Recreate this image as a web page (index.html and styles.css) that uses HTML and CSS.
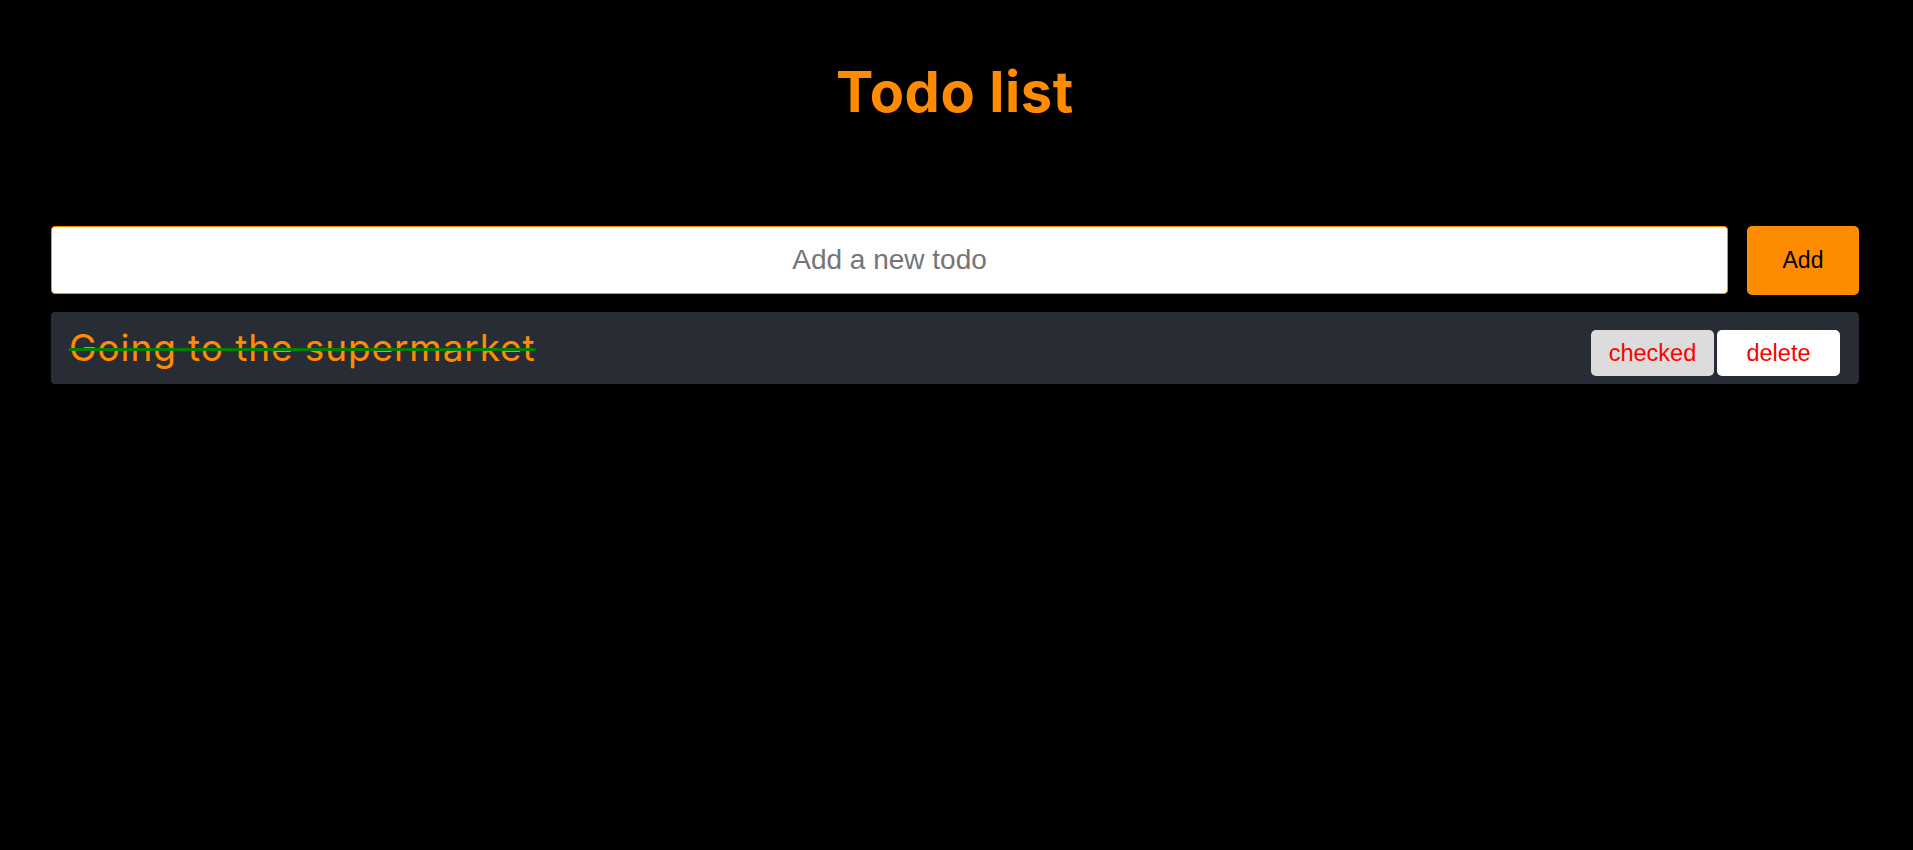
FILE: index.html
```html
<!DOCTYPE html>
<html lang="en">
<head>
<meta charset="utf-8">
<title>Todo list</title>
<link rel="stylesheet" href="styles.css">
</head>
<body>
<div class="app">
  <h1 class="title">Todo list</h1>
  <form class="add-form">
    <input class="add-input" type="text" placeholder="Add a new todo">
    <button class="add-btn" type="button">Add</button>
  </form>
  <ul class="todos">
    <li class="todo">
      <span class="todo-text done">Going to the supermarket</span>
      <div class="todo-actions">
        <button class="btn btn-checked" type="button">checked</button>
        <button class="btn btn-delete" type="button">delete</button>
      </div>
    </li>
  </ul>
</div>
</body>
</html>
```
FILE: styles.css
```css
html, body {
  margin: 0;
  padding: 0;
  background: #000;
}
body {
  font-family: "Liberation Sans", Arial, sans-serif;
}
.app {
  padding: 52px 54px 0 51px;
}
.title {
  margin: 0;
  height: 174px;
  text-align: center;
  font-family: Inter, "Noto Sans", sans-serif;
  font-weight: 700;
  font-size: 56px;
  line-height: 80px;
  letter-spacing: 0.6px;
  color: #ff8c00;
}
.add-form {
  display: flex;
  gap: 19px;
  margin: 0;
}
.add-input {
  flex: 1;
  height: 68px;
  box-sizing: border-box;
  border: 1px solid #ff8c00;
  border-radius: 4px;
  background: #fff;
  font-family: "Liberation Sans", Arial, sans-serif;
  font-size: 28px;
  text-align: center;
  color: #333;
  outline: none;
  padding: 0 10px;
}
.add-input::placeholder {
  color: #757575;
}
.add-btn {
  width: 112px;
  height: 69px;
  border: none;
  border-radius: 5px;
  background: #ff8c00;
  color: #000;
  font-family: "Liberation Sans", Arial, sans-serif;
  font-size: 23px;
}
.todos {
  list-style: none;
  margin: 17px 0 0;
  padding: 0;
}
.todo {
  display: flex;
  justify-content: space-between;
  align-items: flex-start;
  height: 72px;
  box-sizing: border-box;
  padding: 0 19px 0 18px;
  background: #282c34;
  border-radius: 4px;
}
.todo-text {
  font-family: Inter, "Noto Sans", sans-serif;
  font-size: 37px;
  line-height: 72px;
  color: #ff8c00;
  letter-spacing: 0.9px;
}
.todo-text.done {
  text-decoration: line-through;
  text-decoration-color: #008000;
  text-decoration-thickness: 3px;
}
.todo-actions {
  display: flex;
  gap: 3px;
  margin-top: 18px;
}
.btn {
  width: 123px;
  height: 46px;
  border: none;
  border-radius: 5px;
  color: #ff0000;
  font-family: "Liberation Sans", Arial, sans-serif;
  font-size: 23.5px;
  padding: 0;
}
.btn-checked {
  background: #dcdcdc;
}
.btn-delete {
  background: #fff;
}
```
